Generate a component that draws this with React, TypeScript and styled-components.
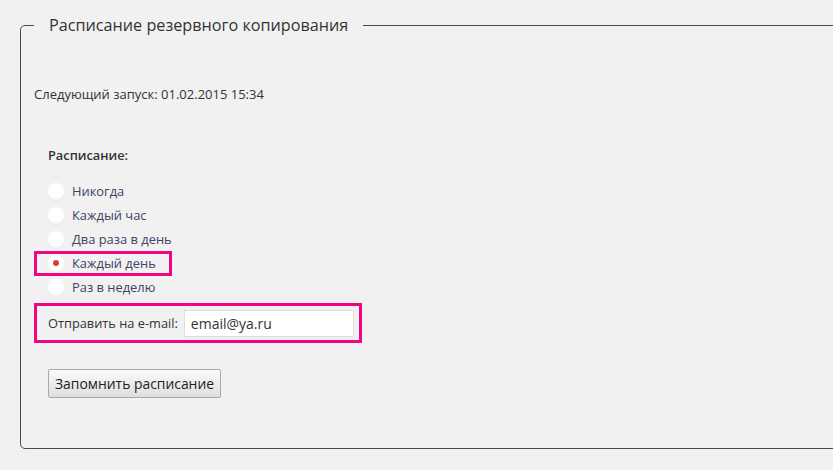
import React, { useState } from 'react'
import styled, { createGlobalStyle } from 'styled-components'

const GlobalStyle = createGlobalStyle`
    html, body {
        margin: 0;
        padding: 0;
        background: #f1f1f1;
        overflow: hidden;
    }
    body {
        font-family: "Open Sans", "Noto Sans", sans-serif;
        color: #333;
    }
`

const Page = styled.div`
    width: 833px;
    height: 470px;
    overflow: hidden;
    padding: 14px 0 0 20px;
    box-sizing: border-box;
`

const Frame = styled.fieldset`
    width: 900px;
    margin: 0;
    padding: 0 0 50px 13px;
    border: 1px solid #4a4a4a;
    border-radius: 5px;
    box-sizing: border-box;
`

const Title = styled.legend`
    padding: 0 15px;
    font-size: 16.2px;
    line-height: 22px;
    color: #333;
`

const NextRun = styled.div`
    margin-top: 49px;
    font-size: 13px;
    line-height: 18px;
    color: #333;
`

const Section = styled.div`
    padding-left: 14px;
    margin-top: 43px;
`

const SectionLabel = styled.div`
    font-size: 12.8px;
    line-height: 18px;
    font-weight: 600;
    color: #333;
    margin-bottom: 15px;
`

const RadioList = styled.div`
    display: flex;
    flex-direction: column;
`

const RadioRow = styled.label<{ $marked?: boolean }>`
    position: relative;
    display: flex;
    align-items: center;
    gap: 8px;
    height: 24px;
    font-size: 12.9px;
    color: #3d4466;
    cursor: pointer;

    ${p => p.$marked && `
        &::after {
            content: '';
            position: absolute;
            top: 0;
            bottom: -1px;
            left: -14px;
            width: 138px;
            border: 3px solid #f2067f;
            box-sizing: border-box;
            pointer-events: none;
        }
    `}
`

const Dot = styled.span<{ $checked: boolean }>`
    width: 16px;
    height: 16px;
    border-radius: 50%;
    background: #fff;
    display: flex;
    align-items: center;
    justify-content: center;

    &::before {
        content: '';
        width: 6px;
        height: 6px;
        border-radius: 50%;
        background: ${p => (p.$checked ? '#dd3d36' : 'transparent')};
    }
`

const HiddenInput = styled.input`
    display: none;
`

const EmailRow = styled.div`
    display: flex;
    align-items: center;
    gap: 6px;
    width: 328px;
    height: 40px;
    margin: 4px 0 0 -14px;
    padding: 0 5px 0 11px;
    border: 3px solid #f2067f;
    box-sizing: border-box;
    font-size: 12.8px;
    color: #333;
    white-space: nowrap;
`

const EmailInput = styled.input`
    width: 170px;
    height: 27px;
    box-sizing: border-box;
    border: 1px solid #ddd;
    background: #fff;
    padding: 0 6px;
    font-family: "Open Sans", "Noto Sans", sans-serif;
    font-size: 14px;
    color: #333;
    outline: none;
`

const SaveButton = styled.button`
    display: block;
    margin-top: 26px;
    height: 29px;
    padding: 0 6px;
    border: 1px solid #a9a9a9;
    border-radius: 2px;
    background: linear-gradient(#fbfbfb, #dedede);
    font-family: "Open Sans", "Noto Sans", sans-serif;
    font-size: 13.9px;
    color: #222;
    white-space: nowrap;
    cursor: pointer;
`

const options = ['Никогда', 'Каждый час', 'Два раза в день', 'Каждый день', 'Раз в неделю']

const App: React.FC = () => {
    const [period, setPeriod] = useState('Каждый день')
    const [email, setEmail] = useState('email@ya.ru')

    return (
        <Page>
            <GlobalStyle />
            <Frame>
                <Title>Расписание резервного копирования</Title>
                <NextRun>Следующий запуск: 01.02.2015 15:34</NextRun>
                <Section>
                    <SectionLabel>Расписание:</SectionLabel>
                    <RadioList>
                        {options.map(opt =>
                            <RadioRow key={opt} $marked={opt === 'Каждый день'}>
                                <HiddenInput
                                    type="radio"
                                    name="period"
                                    checked={period === opt}
                                    onChange={() => setPeriod(opt)}
                                />
                                <Dot $checked={period === opt} />
                                {opt}
                            </RadioRow>
                        )}
                    </RadioList>
                    <EmailRow>
                        <span>Отправить на e-mail:</span>
                        <EmailInput value={email} onChange={e => setEmail(e.target.value)} />
                    </EmailRow>
                    <SaveButton>Запомнить расписание</SaveButton>
                </Section>
            </Frame>
        </Page>
    )
}

export default App
